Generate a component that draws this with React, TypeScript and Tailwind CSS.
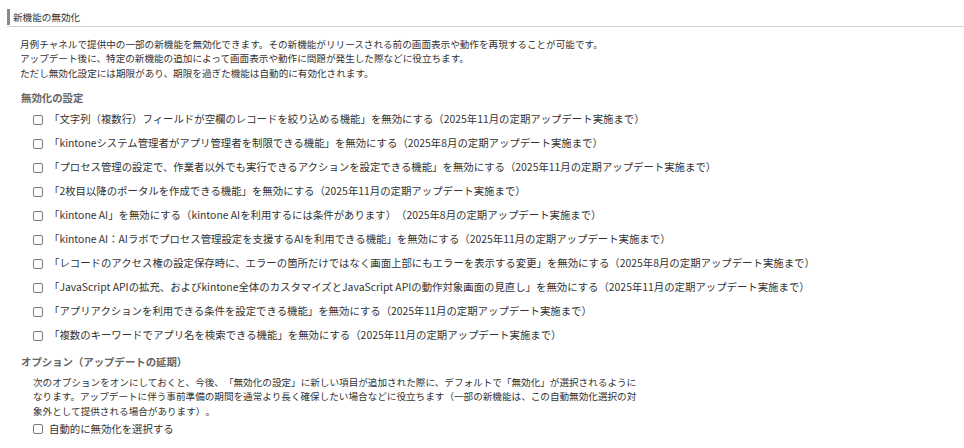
const features = [
  "「文字列（複数行）フィールドが空欄のレコードを絞り込める機能」を無効にする（2025年11月の定期アップデート実施まで）",
  "「kintoneシステム管理者がアプリ管理者を制限できる機能」を無効にする（2025年8月の定期アップデート実施まで）",
  "「プロセス管理の設定で、作業者以外でも実行できるアクションを設定できる機能」を無効にする（2025年11月の定期アップデート実施まで）",
  "「2枚目以降のポータルを作成できる機能」を無効にする（2025年11月の定期アップデート実施まで）",
  "「kintone AI」を無効にする（kintone AIを利用するには条件があります）（2025年8月の定期アップデート実施まで）",
  "「kintone AI：AIラボでプロセス管理設定を支援するAIを利用できる機能」を無効にする（2025年11月の定期アップデート実施まで）",
  "「レコードのアクセス権の設定保存時に、エラーの箇所だけではなく画面上部にもエラーを表示する変更」を無効にする（2025年8月の定期アップデート実施まで）",
  "「JavaScript APIの拡充、およびkintone全体のカスタマイズとJavaScript APIの動作対象画面の見直し」を無効にする（2025年11月の定期アップデート実施まで）",
  "「アプリアクションを利用できる条件を設定できる機能」を無効にする（2025年11月の定期アップデート実施まで）",
  "「複数のキーワードでアプリ名を検索できる機能」を無効にする（2025年11月の定期アップデート実施まで）",
];

const Check = ({ label }: { label: string }) => (
  <label className="flex items-center h-[24px] gap-[6px] whitespace-nowrap text-[10.4px]">
    <input
      type="checkbox"
      className="appearance-none w-[10px] h-[10px] border border-[#7a7a7a] rounded-[2px] bg-white shrink-0"
    />
    <span>{label}</span>
  </label>
);

const App = () => {
  return (
    <div className="w-full h-[448px] overflow-hidden bg-white text-[#333] text-[9.6px] leading-[14.4px] [text-spacing-trim:space-all] font-['Noto_Sans_CJK_JP','Noto_Sans',sans-serif]">
      <div className="pt-[9px] pl-[7px]">
        <div className="border-b border-[#d2d2d2] pb-[1px]">
          <h2 className="border-l-[3px] border-[#8a8a8a] pl-[3px] h-[16px] leading-[16px] font-normal">
            新機能の無効化
          </h2>
        </div>
      </div>

      <p className="mt-[10px] ml-[20px] whitespace-nowrap">
        月例チャネルで提供中の一部の新機能を無効化できます。その新機能がリリースされる前の画面表示や動作を再現することが可能です。
        <br />
        アップデート後に、特定の新機能の追加によって画面表示や動作に問題が発生した際などに役立ちます。
        <br />
        ただし無効化設定には期限があり、期限を過ぎた機能は自動的に有効化されます。
      </p>

      <h3 className="mt-[11px] ml-[21px] font-bold text-[#666] text-[10.4px]">無効化の設定</h3>
      <div className="mt-[2px] ml-[33px] flex flex-col">
        {features.map((f) => (
          <Check key={f} label={f} />
        ))}
      </div>

      <h3 className="mt-[7px] ml-[21px] font-bold text-[#666] text-[10.4px]">オプション（アップデートの延期）</h3>
      <div className="ml-[33px]">
        <p className="mt-[6px] whitespace-nowrap">
          次のオプションをオンにしておくと、今後、「無効化の設定」に新しい項目が追加された際に、デフォルトで「無効化」が選択されるように
          <br />
          なります。アップデートに伴う事前準備の期間を通常より長く確保したい場合などに役立ちます（一部の新機能は、この自動無効化選択の対
          <br />
          象外として提供される場合があります）。
        </p>
        <label className="mt-[3px] flex items-center h-[16px] gap-[6px] whitespace-nowrap text-[10.4px]">
          <input
            type="checkbox"
            className="appearance-none w-[10px] h-[10px] border border-[#7a7a7a] rounded-[2px] bg-white shrink-0"
          />
          <span>自動的に無効化を選択する</span>
        </label>
      </div>
    </div>
  );
};

export default App;
